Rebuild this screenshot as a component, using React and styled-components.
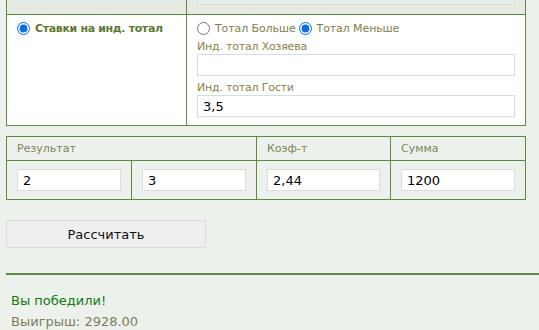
import React from "react";
import styled, { createGlobalStyle } from "styled-components";

const GlobalStyle = createGlobalStyle`
  html, body {
    margin: 0;
    padding: 0;
    background: #edf1eb;
  }
  body {
    font-family: "DejaVu Sans", Verdana, sans-serif;
    overflow: hidden;
  }
`;

const Page = styled.div`
  padding: 0 0 0 6px;
`;

const Block = styled.div`
  width: 518px;
  border: 1px solid #5f8c3a;
  border-top: none;
  display: grid;
  grid-template-columns: 180px 1fr;
`;

const Cell = styled.div`
  background: ${(p) => (p.$muted ? "#e5eae3" : "#ffffff")};
  border-right: ${(p) => (p.$last ? "none" : "1px solid #5f8c3a")};
  border-bottom: ${(p) => (p.$divided ? "1px solid #5f8c3a" : "none")};
  padding: ${(p) => p.$pad || "0 10px"};
  height: ${(p) => p.$h || "auto"};
  box-sizing: border-box;
`;

const DisabledBox = styled.div`
  height: 5px;
  background: #e9ede7;
  border: 1px solid #d6dbd3;
  border-top: none;
  box-sizing: border-box;
`;

const OptionRow = styled.div`
  display: flex;
  align-items: center;
  height: 14px;
`;

const Radio = styled.input.attrs({ type: "radio" })`
  width: 13px;
  height: 13px;
  margin: 0 5px 0 0;
  flex: none;
  accent-color: #0a6cf5;
`;

const OptionLabel = styled.label`
  display: flex;
  align-items: center;
  font-size: 11px;
  color: ${(p) => (p.$strong ? "#5c7a2e" : "#7f8048")};
  font-weight: ${(p) => (p.$strong ? "bold" : "normal")};
  letter-spacing: ${(p) => (p.$strong ? "-0.35px" : "-0.1px")};
  margin-right: 3px;
  white-space: nowrap;
`;

const FieldLabel = styled.div`
  font-size: 11px;
  color: #8a8240;
  margin: 5px 0 1px 0;
  line-height: 13px;
  letter-spacing: -0.2px;
`;

const TextInput = styled.input`
  display: block;
  width: 100%;
  height: 22px;
  box-sizing: border-box;
  border: 1px solid #d9dcd8;
  background: #fff;
  padding: 1px 5px 0;
  font-family: "DejaVu Sans", Verdana, sans-serif;
  font-size: 13px;
  color: #000;
  outline: none;
`;

const ResultGrid = styled.div`
  margin-top: 10px;
  width: 518px;
  border: 1px solid #5f8c3a;
  display: grid;
  grid-template-columns: 125px 125px 134px 1fr;
  background: #edf1eb;
`;

const HeadCell = styled.div`
  grid-column: span ${(p) => p.$span || 1};
  font-size: 11px;
  color: #7b8658;
  height: 23px;
  line-height: 23px;
  padding: 0 10px;
  border-right: ${(p) => (p.$last ? "none" : "1px solid #5f8c3a")};
  border-bottom: 1px solid #5f8c3a;
`;

const BodyCell = styled.div`
  padding: 8px 10px;
  border-right: ${(p) => (p.$last ? "none" : "1px solid #5f8c3a")};
`;

const Button = styled.button`
  margin-top: 20px;
  width: 200px;
  height: 28px;
  background: #efefef;
  border: 1px solid #dcdcdc;
  font-family: "DejaVu Sans", Verdana, sans-serif;
  font-size: 13px;
  color: #111;
  cursor: pointer;
`;

const Rule = styled.div`
  margin-top: 25px;
  height: 2px;
  background: #5f8c3a;
`;

const Message = styled.div`
  font-size: 13px;
  line-height: 21px;
  color: ${(p) => (p.$win ? "#0a7d0a" : "#7a7f5a")};
  margin-top: ${(p) => p.$mt || "0"};
  padding-left: 5px;
`;

export default function App() {
  return (
    <>
      <GlobalStyle />
      <Page>
        <Block>
          <Cell $muted $divided $h="15px" />
          <Cell $muted $divided $last $h="15px">
            <DisabledBox />
          </Cell>
          <Cell $pad="6px 10px" $h="110px">
            <OptionRow>
              <OptionLabel $strong>
                <Radio name="mode" defaultChecked />
                Ставки на инд. тотал
              </OptionLabel>
            </OptionRow>
          </Cell>
          <Cell $last $pad="6px 10px" $h="110px">
            <OptionRow>
              <OptionLabel>
                <Radio name="total" />
                Тотал Больше
              </OptionLabel>
              <OptionLabel>
                <Radio name="total" defaultChecked />
                Тотал Меньше
              </OptionLabel>
            </OptionRow>
            <FieldLabel>Инд. тотал Хозяева</FieldLabel>
            <TextInput defaultValue="" />
            <FieldLabel>Инд. тотал Гости</FieldLabel>
            <TextInput defaultValue="3,5" />
          </Cell>
        </Block>

        <ResultGrid>
          <HeadCell $span={2}>Результат</HeadCell>
          <HeadCell>Коэф-т</HeadCell>
          <HeadCell $last>Сумма</HeadCell>
          <BodyCell>
            <TextInput defaultValue="2" />
          </BodyCell>
          <BodyCell>
            <TextInput defaultValue="3" />
          </BodyCell>
          <BodyCell>
            <TextInput defaultValue="2,44" />
          </BodyCell>
          <BodyCell $last>
            <TextInput defaultValue="1200" />
          </BodyCell>
        </ResultGrid>

        <Button>Рассчитать</Button>
        <Rule />
        <Message $win $mt="15px">Вы победили!</Message>
        <Message>Выигрыш: 2928.00</Message>
      </Page>
    </>
  );
}
